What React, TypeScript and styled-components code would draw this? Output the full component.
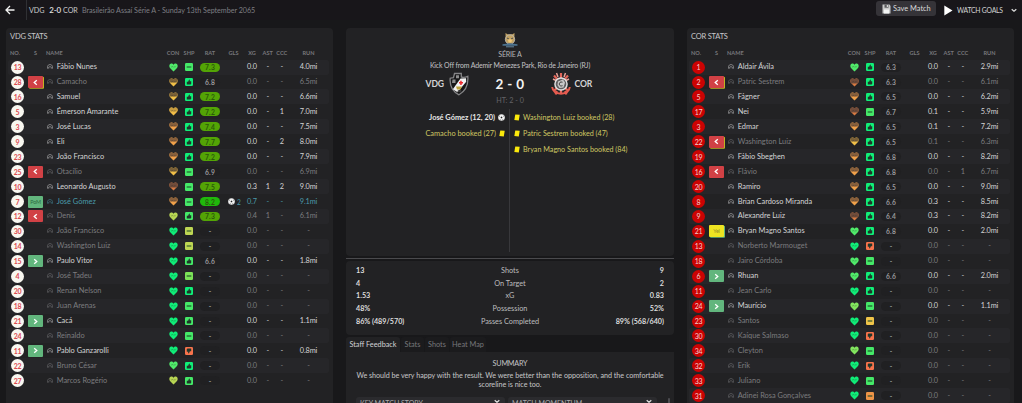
import React from 'react';
import styled, { createGlobalStyle } from 'styled-components';

const GlobalStyle = createGlobalStyle`
  * {
    box-sizing: border-box;
  }
  body {
    margin: 0;
    background: #18181a;
    overflow: hidden;
    font-family: Lato, 'Open Sans', sans-serif;
    font-size: 7.4px;
    color: #d4d4d5;
  }
`;

const Page = styled.div`
  width: 1022px;
  height: 403px;
  display: flex;
  flex-direction: column;
  overflow: hidden;
`;

const TopBar = styled.header`
  height: 20px;
  flex: none;
  display: flex;
  align-items: center;
  background: #18161a;
  padding-right: 5px;
`;

const BackButton = styled.div`
  width: 27px;
  height: 20px;
  padding-left: 5px;
  border-right: 1px solid #303034;
  display: flex;
  align-items: center;
`;

const ScoreLine = styled.div`
  margin-left: 2px;
  width: 53px;
  display: flex;
  gap: 5px;
  font-size: 7.2px;
  letter-spacing: -0.1px;
  color: #c9c9cb;
  white-space: nowrap;

  b {
    font-weight: 600;
    font-size: 7.9px;
    line-height: 9px;
    margin-right: -3px;
    color: #e0e0e0;
  }
`;

const Competition = styled.div`
  flex: 1;
  font-size: 7.2px;
  letter-spacing: -0.04px;
  color: #7d7d82;
  white-space: nowrap;
`;

const SaveButton = styled.div`
  width: 60px;
  height: 15px;
  margin-top: -3px;
  margin-right: 8px;
  padding-left: 6px;
  border-radius: 3px;
  background: #353338;
  display: flex;
  align-items: center;
  gap: 2px;
  font-size: 7.4px;
  color: #dadada;
  white-space: nowrap;
`;

const WatchGoals = styled.div`
  display: flex;
  align-items: center;
  font-size: 6.8px;
  letter-spacing: -0.22px;
  width: 73px;
  gap: 4px;
  white-space: nowrap;

  span {
    flex: 1;
  }
`;

const Columns = styled.main`
  display: flex;
  flex: 1;
  gap: 13px;
  padding: 8px 8px 0 6px;
  min-height: 0;
`;

const Panel = styled.section`
  width: 327px;
  flex: none;
  background: #222224;
  border-radius: 4px 4px 0 0;
  overflow: hidden;
`;

const PanelTitle = styled.h2`
  margin: 0;
  padding: 3.5px 0 0 4px;
  height: 19px;
  font-size: 7.5px;
  font-weight: 400;
  line-height: 10px;
  letter-spacing: -0.2px;
  color: #c8c8ca;
`;

const Row = styled.div<{ $striped?: boolean; $color?: string }>`
  display: grid;
  grid-template-columns: 19px 17px 12px 109px 16px 16px 26px 21px 16px 15.5px 12.5px 41px;
  align-items: center;
  justify-items: center;
  width: 321px;
  height: 14.94px;
  margin-left: 2px;
  border-radius: 2px;
  background: ${props => (props.$striped ? '#262629' : 'transparent')};
  color: ${props => props.$color || '#d4d4d5'};
  line-height: 10px;
  white-space: nowrap;
`;

const HeadRow = styled(Row)`
  height: 12px;
  font-size: 5.6px;
  font-weight: 700;
  color: #77777b;
  margin-bottom: 0.6px;
`;

const LeftCell = styled.span<{ $pad?: number }>`
  justify-self: start;
  padding-left: ${props => props.$pad || 0}px;
`;

const Shirt = styled.span<{ $away?: boolean }>`
  width: 13px;
  height: 13px;
  border-radius: 50%;
  display: flex;
  align-items: center;
  justify-content: center;
  font-size: 7px;
  font-weight: ${props => (props.$away ? 400 : 700)};
  letter-spacing: -0.3px;
  background: ${props => (props.$away ? '#cb0303' : '#f8f7f0')};
  color: ${props => (props.$away ? '#f3cfcf' : '#dc4a50')};
`;

const badgeColors: Record<string, string> = {
  off: '#d14145',
  in: '#62b67d',
  pom: '#62b67d',
  yel: '#eee422',
};

const Badge = styled.span<{ $kind: string; $edge?: string }>`
  width: 15px;
  height: 12px;
  border-radius: 1px;
  display: flex;
  align-items: center;
  justify-content: center;
  background: ${props => badgeColors[props.$kind]};
  box-shadow: ${props => (props.$edge ? `1px 0.7px 0 ${props.$edge}` : 'none')};
  font-size: 5.4px;
  letter-spacing: -0.2px;
  color: ${props => (props.$kind === 'yel' ? '#96902a' : '#2c6a41')};
`;

const Rating = styled.span<{ $bg?: string }>`
  width: 20px;
  height: 9px;
  border-radius: 5px;
  display: flex;
  align-items: center;
  justify-content: center;
  font-size: 6.7px;
  letter-spacing: 0.2px;
  font-weight: 700;
  background: ${props => props.$bg || '#202022'};
  color: ${props => (props.$bg ? '#2b5a0b' : '#98989a')};
`;

const Goals = styled.span`
  display: flex;
  align-items: center;
  gap: 2px;
  margin-left: 2px;
  font-size: 6.6px;
`;

const Value = styled.span`
  font-size: 7.3px;
  letter-spacing: -0.1px;
`;

const Center = styled.div`
  width: 328px;
  flex: none;
  display: flex;
  flex-direction: column;
`;

const MatchCard = styled.section`
  height: 228px;
  flex: none;
  background: #222224;
  border-radius: 4px;
  display: flex;
  flex-direction: column;
  align-items: center;
  padding-top: 4px;
`;

const League = styled.div`
  margin-top: 1px;
  height: 11px;
  line-height: 11px;
  font-size: 7.1px;
  letter-spacing: -0.2px;
  color: #b4b4b6;
`;

const Venue = styled.div`
  height: 10px;
  line-height: 10px;
  font-size: 6.9px;
  letter-spacing: -0.12px;
  color: #c4c4c6;
  white-space: nowrap;
`;

const Teams = styled.div`
  margin-top: 2px;
  height: 24px;
  display: grid;
  grid-template-columns: 124px 80px 124px;
  align-items: center;
`;

const Team = styled.div<{ $away?: boolean }>`
  display: flex;
  align-items: center;
  justify-content: ${props => (props.$away ? 'flex-start' : 'flex-end')};
  gap: ${props => (props.$away ? 3.5 : 5)}px;
  padding: ${props => (props.$away ? '0 0 0 1px' : '0 1px 0 0')};
  font-size: 8.6px;
  font-weight: 700;
  letter-spacing: -0.1px;
`;

const Score = styled.div`
  text-align: center;
  font-size: 13.5px;
  font-weight: 700;
  letter-spacing: 0.3px;
  color: #f3f3f3;
`;

const HalfTime = styled.div`
  height: 10px;
  line-height: 10px;
  margin-bottom: 3px;
  font-size: 7.2px;
  color: #636367;
`;

const Events = styled.div`
  width: 100%;
  height: 143px;
  display: grid;
  grid-template-columns: 1fr 1fr;
`;

const EventList = styled.div<{ $away?: boolean }>`
  display: flex;
  flex-direction: column;
  align-items: ${props => (props.$away ? 'flex-start' : 'flex-end')};
  padding: ${props => (props.$away ? '0 0 0 4px' : '0 4px 0 0')};
  height: 143px;
  border-right: ${props => (props.$away ? 'none' : '1px solid #38383b')};
`;

const EventItem = styled.div<{ $goal?: boolean; $away?: boolean }>`
  height: 16px;
  display: flex;
  align-items: center;
  flex-direction: ${props => (props.$away ? 'row' : 'row-reverse')};
  gap: 3px;
  font-size: ${props => (props.$away ? 7.2 : 7.4)}px;
  font-weight: ${props => (props.$goal ? 700 : 400)};
  color: ${props => (props.$goal ? '#e8e8e8' : '#cfc763')};
  white-space: nowrap;
`;

const Divider = styled.div`
  height: 1px;
  flex: none;
  background: #4a4a4d;
  margin: 2px 0;
`;

const StatsCard = styled.section`
  height: 74px;
  flex: none;
  padding: 3px 10px 0;
  background: #222224;
  border-radius: 4px;
`;

const StatRow = styled.div`
  height: 12.8px;
  display: grid;
  grid-template-columns: 1fr 1fr 1fr;
  align-items: center;
  text-align: center;
  font-size: 7.3px;
  color: #bcbcbe;

  b {
    text-align: left;
    font-size: 7.2px;
    font-weight: 700;
    color: #dcdcdc;
  }
  b:last-child {
    text-align: right;
  }
`;

const Tabs = styled.nav`
  height: 15px;
  margin-top: 2px;
  flex: none;
  display: flex;
  gap: 1px;
`;

const Tab = styled.div<{ $active?: boolean; $width: number }>`
  width: ${props => props.$width}px;
  height: 15px;
  line-height: 15px;
  text-align: center;
  border-radius: 3px 3px 0 0;
  font-size: 7.3px;
  white-space: nowrap;
  background: ${props => (props.$active ? '#222224' : '#1b1b1d')};
  color: ${props => (props.$active ? '#d2d2d4' : '#77777b')};
`;

const Feedback = styled.section`
  flex: 1;
  min-height: 0;
  display: flex;
  flex-direction: column;
  background: #222224;
  padding: 6.5px 3px 0 10px;
  text-align: center;
`;

const Summary = styled.p`
  margin: 0;
  padding-right: 7px;
  font-size: 7.2px;
  line-height: 9.8px;
  letter-spacing: -0.03px;
  color: #c6c6c8;
  white-space: nowrap;

  strong {
    display: block;
    font-weight: 400;
    line-height: 10px;
    margin-bottom: 2.2px;
    font-size: 7.2px;
    letter-spacing: -0.2px;
  }
`;

const Reports = styled.div`
  margin-top: 6.5px;
  height: 30px;
  flex: none;
  display: flex;
  gap: 3px;
`;

const Report = styled.div`
  width: 149px;
  flex: none;
  padding: 2.5px 5px 0 4px;
  display: flex;
  justify-content: space-between;
  background: #2b2b2e;
  border-radius: 3px;
  font-size: 7px;
  color: #aaaaac;
`;

const Scrollbar = styled.div`
  width: 2px;
  height: 20px;
  margin: 1px 0 0 8px;
  border-radius: 1px;
  background: #4c4c50;
`;

const CON = {
  g: ['#10ed78', '#10ed78'],
  l: ['#50ea6a', '#50ea6a'],
  m: ['#82e65e', '#82e65e'],
  c: ['#b8d653', '#b8d653'],
  y: ['#796038', '#f0bf48'],
  f: ['#c59b40', '#f1bd48'],
  o: ['#875f3c', '#f0a14a'],
  r: ['#704c3b', '#d87a42'],
};

const SHP: Record<string, string> = {
  g: '#10ef78',
  l: '#45e968',
  m: '#7ce358',
  c: '#bed653',
  y: '#f0c549',
  o: '#ee9447',
  r: '#f8734c',
};

const Heart = ({ tone }: { tone: string }) => {
  const [top, bottom] = CON[tone as keyof typeof CON];
  const half = tone === 'r' ? 5 : 4;
  const d = 'M4.5 8.600 1 5C-.4 3 .5.6 2.300.6c1 0 1.700.5 2.200 1.200C5 1.100 5.700.6 6.700.6 8.500.6 9.400 3 8 5Z';
  return (
    <svg width="9" height="9" viewBox="0 0 9 9">
      <path d={d} fill={bottom} />
      {top !== bottom && (
        <path d={`M1 ${half}.6C-.4 3 .5.6 2.300.6c1 0 1.700.5 2.200 1.200C5 1.100 5.700.6 6.700.6 8.500.6 9.400 3 8 ${half}.6Z`} fill={top} />
      )}
      <path d="M2 3.900h1l.8-.5 1 1 .8-.7h1.200" fill="none" stroke="#252526" strokeWidth=".6" opacity=".45" />
    </svg>
  );
};

// first letter is the colour, second one the glyph: u(p), d(own) or - (level)
const Sharpness = ({ code }: { code: string }) => {
  const thumb = 'M1.800 3.700h1.300L4.100 1.600c.9 0 .9.9.6 1.700h1.500v2.800L5.400 6.500H1.800Z';
  return (
    <svg width="8" height="8" viewBox="0 0 8 8">
      <rect width="8" height="8" rx="1.2" fill={SHP[code[0]]} />
      {code[1] === '-' ? (
        <path d="M1.700 4h4.600" stroke="#1c4529" strokeWidth="1.1" />
      ) : (
        <path d={thumb} fill="#20372b" transform={code[1] === 'd' ? 'rotate(180 4 4)' : undefined} />
      )}
    </svg>
  );
};

const PersonIcon = () => (
  <svg width="6" height="6" viewBox="0 0 6 6" fill="none" stroke="currentColor" strokeWidth=".7" opacity=".75">
    <path d="M.6 4.700V2.700C.6 1.400 1.600.6 3 .6s2.400.8 2.400 2.100v2M1.700 4.600V3.300c.8-.8 1.800-.8 2.600 0v1.300" />
  </svg>
);

const BallIcon = () => (
  <svg width="7" height="7" viewBox="0 0 7 7">
    <circle cx="3.5" cy="3.5" r="3.3" fill="#f2f2f2" />
    <path d="m3.500 2.600.9.7-.3 1H2.900l-.3-1Z" fill="#222224" />
    <path d="m.7 1.500.9.700M6.300 1.500l-.9.7M1.900 6.400l.3-.9M5.100 6.400l-.3-.9" stroke="#222224" strokeWidth=".8" />
  </svg>
);

const CardIcon = () => (
  <svg width="6" height="7" viewBox="0 0 6 7">
    <path d="m1.300.5 4.400.3-.9 5.700L.3 6Z" fill="#fbe90c" />
  </svg>
);

const Chevron = ({ right }: { right?: boolean }) => (
  <svg width="7" height="7" viewBox="0 0 7 7" fill="none" stroke="#fff" strokeWidth="1.3">
    <path d={right ? 'M2.200 1.200 4.800 3.500 2.200 5.800' : 'M4.800 1.200 2.200 3.500l2.600 2.300'} />
  </svg>
);

const DownIcon = () => (
  <svg width="6" height="5" viewBox="0 0 6 5" fill="none" stroke="#dedede" strokeWidth="1.2">
    <path d="m.7 1.200 2.300 2.100 2.300-2.100" />
  </svg>
);

const LeagueLogo = () => (
  <svg width="16" height="16" viewBox="0 0 16 16">
    <path d="m3.500 1 2 1.200h5l2-1.200-.1 4c1 2.500.2 5.300-1.800 6.500H5.400C3.400 10.300 2.600 7.500 3.600 5Z" fill="#c2a365" />
    <circle cx="8" cy="7.500" r="4.700" fill="none" stroke="#b7bcc2" strokeWidth=".7" />
    <path d="m5.200 5.500 1.600.7v.8H5.200ZM10.800 5.500l-1.600.7V7h1.600Z" fill="#4e4c4c" />
    <path d="M6 8.300 8 7l2 1.300-.7 2.200H6.700Z" fill="#efc878" />
    <path d="M.5 12.200q7.500-1.500 15 0v1.500h-15Z" fill="#4c7390" />
    <path d="M4 14.800h8" stroke="#6688a0" strokeWidth="1" />
  </svg>
);

const VascoCrest = () => (
  <svg width="20" height="24" viewBox="0 0 20 24">
    <path
      d="M5.500 1.500h6.800V5c2 .5 4.500.2 6.500-.7.7 8.200-1.300 14.200-8.800 18.500C3 19.300.6 13.500 1.200 6.200l3.300-.6Z"
      fill="#171718"
      stroke="#858587"
      strokeWidth="1.3"
    />
    <path d="M11.500 6.500 17 6.200l.2 3.600-8.700 10.400-4.700-2.900Z" fill="#f2f2f2" />
    <path d="M7 3.200h3v3H7ZM3.500 7.500h3V11H3Z" fill="#8d8d8d" />
    <path d="M7 14.500h6l-1.500 3H8Z" fill="#bea43e" />
    <path d="M10 10h1.200V8.700h1.500V10H14v1.600h-1.300V13h-1.500v-1.400H10Z" fill="#ef292d" />
    <path d="M8.500 20.500 9.500 18l1 2 1.200-2 .2 2.500" fill="none" stroke="#444" strokeWidth=".7" />
  </svg>
);

const CorinthiansCrest = () => (
  <svg width="20" height="24" viewBox="0 0 20 24">
    <path d="M3 3.500 17 19M17 3.500 3 19M10 1v21" stroke="#e36558" strokeWidth="2.2" />
    <path d="M5.500 1 7 5M14.500 1 13 5M2 7l4 2M18 7l-4 2" stroke="#e9a197" strokeWidth="1.5" />
    <path
      d="M1.200 15c.5 4.500 4 6.500 8.800 6.700 4.800-.2 8.300-2.200 8.800-6.700M6 19l-1.500 3.500M14 19l1.500 3.500"
      fill="none"
      stroke="#e85c50"
      strokeWidth="2"
    />
    <circle cx="10" cy="12" r="6.800" fill="#dedede" />
    <circle cx="10" cy="12" r="5.300" fill="#605e60" />
    <path d="M7 9.500 12 7.500l2 3-1.500 5-4 .5L6.500 13Z" fill="#c9c8c8" />
    <path d="M11.500 10.200c-2.200-.7-3.300.4-3.200 2 .1 1.500 1.500 2.200 3.200 1.500" fill="none" stroke="#3d3939" />
  </svg>
);

interface Player {
  no: string;
  name: string;
  con: string;
  shp: string;
  rat?: string;
  xg: string;
  ast?: string;
  ccc?: string;
  run?: string;
  badge?: string;
  booked?: boolean;
  goals?: string;
}

// no | name | con | shp | rating | xg | ast | ccc | run | badge | booked | goals
const parse = (text: string): Player[] =>
  text
    .trim()
    .split('\n')
    .map(line => {
      const [no, name, con, shp, rat, xg, ast, ccc, run, badge, booked, goals] = line.trim().split('|');
      return { no, name, con, shp, rat, xg, ast, ccc, run, badge, booked: booked === 'b', goals };
    });

const homePlayers = parse(`
13|Fábio Nunes|l|l-|7.3|0.0|-|-|4.0mi
28|Camacho|y|gu|6.8|0.0|-|-|6.5mi|off|b
16|Samuel|y|gu|7.2|0.0|-|-|6.6mi
5|Émerson Amarante|f|gu|7.2|0.0|-|1|7.0mi
3|José Lucas|o|gu|7.4|0.0|-|-|7.5mi
9|Eli|o|gu|7.7|0.0|-|2|8.0mi
23|João Francisco|o|gu|7.2|0.0|-|-|7.9mi
25|Otacílio|y|l-|6.9|0.0|-|-|6.9mi|off
10|Leonardo Augusto|r|l-|7.5|0.3|1|2|9.0mi
7|José Gómez|o|l-|8.2|0.7|-|-|9.1mi|pom||2
12|Denis|c|lu|7.3|0.4|1|-|6.1mi|off
30|João Francisco|g|c-|-|0.0|-|-|-
14|Washington Luiz|g|c-|-|0.0|-|-|-
15|Paulo Vitor|g|lu|6.6|0.0|-|-|1.8mi|in
4|José Tadeu|g|m-|-|0.0|-|-|-
20|Renan Nelson|g|gu|-|0.0|-|-|-
18|Juan Arenas|g|l-|-|0.0|-|-|-
21|Cacá|g|lu|-|0.0|-|-|1.1mi|in
24|Reinaldo|g|l-|-|0.0|-|-|-
11|Pablo Ganzarolli|g|rd|-|0.0|-|-|0.8mi|in
22|Bruno César|l|gu|-|0.0|-|-|-
27|Marcos Rogério|c|lu|-|0.0|-|-|-
`);

const awayPlayers = parse(`
1|Aldair Ávila|l|gu|6.3|0.0|-|-|2.9mi
2|Patric Sestrem|r|gu|6.3|0.0|-|-|6.1mi|off|b
5|Fágner|o|gu|6.5|0.0|-|-|6.2mi
17|Nei|r|l-|6.7|0.1|-|-|5.9mi
3|Edmar|o|gu|6.5|0.1|-|-|7.2mi
22|Washington Luiz|y|gu|6.5|0.1|-|-|6.3mi|off|b
19|Fábio Sbeghen|o|gu|6.8|0.0|-|-|8.2mi
16|Flávio|o|gu|6.8|0.0|-|1|6.7mi|off
20|Ramiro|o|gu|6.5|0.0|-|-|9.0mi
8|Brian Cardoso Miranda|o|gu|6.6|0.3|-|-|8.5mi
9|Alexandre Luiz|r|gu|6.4|0.3|-|-|8.2mi
21|Bryan Magno Santos|l|gu|6.8|0.0|-|-|2.0mi|yel|b
13|Norberto Marmouget|g|rd|-|0.0|-|-|-
18|Jairo Córdoba|l|l-|-|0.0|-|-|-
6|Rhuan|l|gu|6.6|0.0|-|-|2.0mi|in
11|Jean Carlo|g|gu|-|0.0|-|-|-
24|Maurício|m|l-|-|0.0|-|-|1.1mi|in
23|Santos|g|y-|-|0.0|-|-|-
30|Kaíque Salmaso|g|rd|-|0.0|-|-|-
34|Cleyton|m|l-|-|0.0|-|-|-
32|Erik|g|rd|-|0.0|-|-|-
33|Juliano|g|l-|-|0.0|-|-|-
31|Adinei Rosa Gonçalves|g|o-|-|0.0|-|-|-
`);

const rowColor = (p: Player) => {
  if (p.badge === 'pom') return '#4a9aaa';
  return p.badge === 'off' || p.run === '-' ? '#7c7c7f' : '#d4d4d5';
};

const ratingColor = (rat = '-') => {
  const n = parseFloat(rat);
  if (n >= 8) return '#20b80b';
  return n >= 7 ? '#53a405' : undefined;
};

const TeamStats = ({ title, players, away }: { title: string; players: Player[]; away?: boolean }) => (
  <Panel>
    <PanelTitle>{title}</PanelTitle>
    <HeadRow>
      <LeftCell $pad={2}>NO.</LeftCell>
      <span>S</span>
      <LeftCell $pad={2}>NAME</LeftCell>
      <span />
      <span>CON</span>
      <span>SHP</span>
      <span>RAT</span>
      <span>GLS</span>
      <span>XG</span>
      <span>AST</span>
      <span>CCC</span>
      <span>RUN</span>
    </HeadRow>
    {players.map((p, i) => (
      <Row key={p.no} $striped={i % 2 === 0} $color={rowColor(p)}>
        <Shirt $away={away}>{p.no}</Shirt>
        {p.badge ? (
          <Badge $kind={p.badge} $edge={p.booked ? (p.badge === 'yel' ? '#62b67d' : '#c2b322') : undefined}>
            {p.badge === 'off' && <Chevron />}
            {p.badge === 'in' && <Chevron right />}
            {p.badge === 'pom' && 'PoM'}
            {p.badge === 'yel' && 'Yel'}
          </Badge>
        ) : (
          <span />
        )}
        <PersonIcon />
        <LeftCell $pad={0.7}>{p.name}</LeftCell>
        <Heart tone={p.con} />
        <Sharpness code={p.shp} />
        <Rating $bg={ratingColor(p.rat)}>{p.rat}</Rating>
        <Goals>
          {p.goals && <BallIcon />}
          {p.goals}
        </Goals>
        <Value>{p.xg}</Value>
        <Value>{p.ast}</Value>
        <Value>{p.ccc}</Value>
        <Value>{p.run}</Value>
      </Row>
    ))}
  </Panel>
);

const matchStats = [
  ['13', 'Shots', '9'],
  ['4', 'On Target', '2'],
  ['1.53', 'xG', '0.83'],
  ['48%', 'Possession', '52%'],
  ['86% (489/570)', 'Passes Completed', '89% (568/640)'],
];

const App = () => {
  return (
    <>
      <GlobalStyle />
      <Page>
        <TopBar>
          <BackButton>
            <svg width="10" height="10" viewBox="0 0 10 10" fill="none" stroke="#f2f2f2" strokeWidth="1.3">
              <path d="M9.500 5H1M5 1 1 5l4 4" />
            </svg>
          </BackButton>
          <ScoreLine>
            VDG <b>2-0</b> COR
          </ScoreLine>
          <Competition>Brasileirão Assaí Série A - Sunday 13th September 2065</Competition>
          <SaveButton>
            <svg width="9" height="10" viewBox="0 0 9 10">
              <path d="M.5.5h7L8.500 2v7.500h-8Z" fill="#c9c9c9" />
              <path d="M2.500.5h4v3.200h-4Z" fill="#5a5a5c" />
              <path d="M4.800 1h1v2h-1ZM2 5.500h5v4H2Z" fill="#f4f4f4" />
            </svg>
            Save Match
          </SaveButton>
          <WatchGoals>
            <svg width="9" height="11" viewBox="0 0 9 11">
              <path d="M.3.500 8.500 5.500.3 10.500Z" fill="#fff" />
            </svg>
            <span>WATCH GOALS</span>
            <DownIcon />
          </WatchGoals>
        </TopBar>

        <Columns>
          <TeamStats title="VDG STATS" players={homePlayers} />

          <Center>
            <MatchCard>
              <LeagueLogo />
              <League>SÉRIE A</League>
              <Venue>Kick Off from Ademir Menezes Park, Rio de Janeiro (RJ)</Venue>
              <Teams>
                <Team>
                  VDG <VascoCrest />
                </Team>
                <Score>2 - 0</Score>
                <Team $away>
                  <CorinthiansCrest /> COR
                </Team>
              </Teams>
              <HalfTime>HT: 2 - 0</HalfTime>
              <Events>
                <EventList>
                  <EventItem $goal>
                    <BallIcon /> José Gómez (12, 20)
                  </EventItem>
                  <EventItem>
                    <CardIcon /> Camacho booked (27)
                  </EventItem>
                </EventList>
                <EventList $away>
                  {['Washington Luiz booked (28)', 'Patric Sestrem booked (47)', 'Bryan Magno Santos booked (84)'].map(text => (
                    <EventItem key={text} $away>
                      <CardIcon /> {text}
                    </EventItem>
                  ))}
                </EventList>
              </Events>
            </MatchCard>

            <Divider />

            <StatsCard>
              {matchStats.map(([home, label, away]) => (
                <StatRow key={label}>
                  <b>{home}</b>
                  <span>{label}</span>
                  <b>{away}</b>
                </StatRow>
              ))}
            </StatsCard>

            <Tabs>
              <Tab $width={54} $active>Staff Feedback</Tab>
              <Tab $width={23}>Stats</Tab>
              <Tab $width={24}>Shots</Tab>
              <Tab $width={36}>Heat Map</Tab>
            </Tabs>
            <Feedback>
              <Summary>
                <strong>SUMMARY</strong>
                We should be very happy with the result. We were better than the opposition, and the comfortable
                <br />
                scoreline is nice too.
              </Summary>
              <Reports>
                <Report>
                  <span>KEY MATCH STORY</span>
                  <DownIcon />
                </Report>
                <Report>
                  <span>MATCH MOMENTUM</span>
                  <DownIcon />
                </Report>
                <Scrollbar />
              </Reports>
            </Feedback>
          </Center>

          <TeamStats title="COR STATS" players={awayPlayers} away />
        </Columns>
      </Page>
    </>
  );
};

export default App;
